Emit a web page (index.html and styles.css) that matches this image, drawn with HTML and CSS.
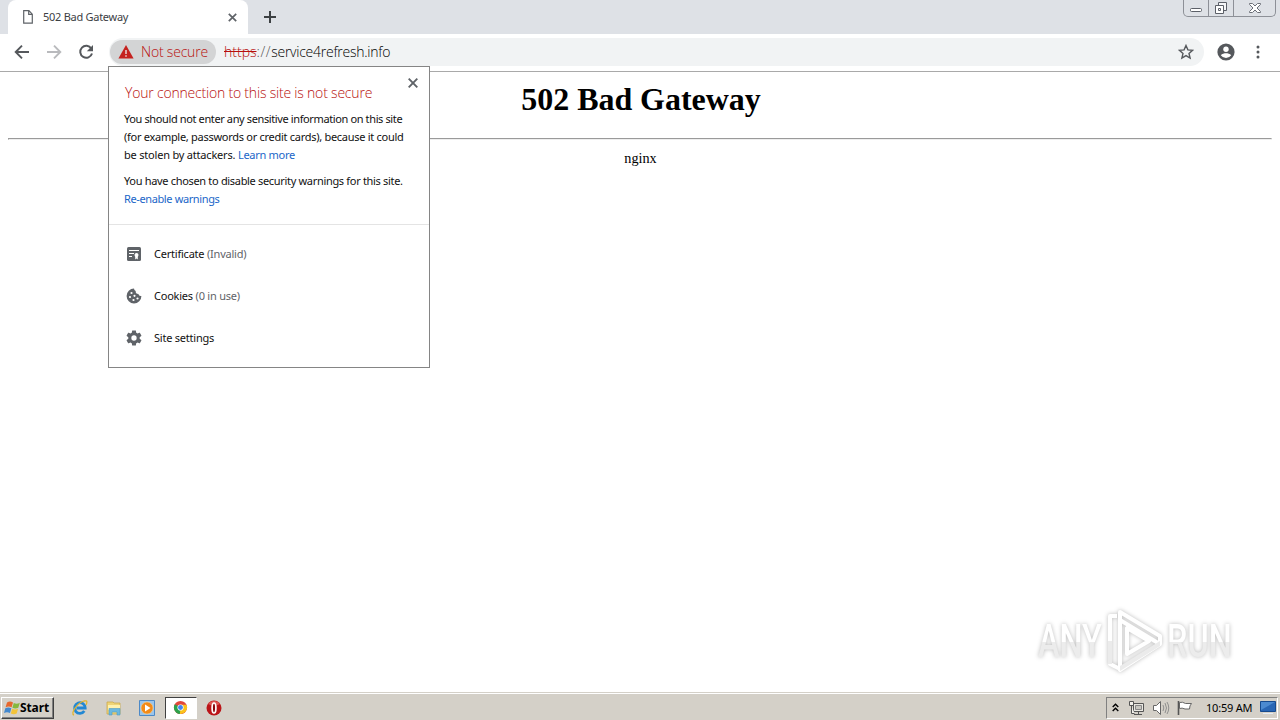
FILE: index.html
```html
<!DOCTYPE html>
<html lang="en">
<head>
    <meta charset="UTF-8">
    <title>502 Bad Gateway</title>
    <link rel="stylesheet" href="styles.css">
</head>
<body>
    <div class="desktop">
        <header class="tab-strip">
            <div class="tab">
                <svg class="page-icon" width="10" height="14" viewBox="0 0 10 14"><path d="M.7.7h5.2l3.4 3.5v9H.7zM5.7.7v3.7h3.6" fill="none" stroke="#5f6368" stroke-width="1.2"/></svg>
                <span class="tab-title">502 Bad Gateway</span>
                <svg class="tab-close" width="9" height="9" viewBox="0 0 9 9"><path d="M.8.8l7.4 7.4M8.2.8L.8 8.2" stroke="#5f6368" stroke-width="1.7"/></svg>
            </div>
            <svg class="new-tab" width="12" height="12" viewBox="0 0 12 12"><path d="M6 0v12M0 6h12" stroke="#3c4043" stroke-width="2"/></svg>
            <div class="window-buttons">
                <span><svg width="14" height="16" viewBox="0 0 14 16"><rect x="1.5" y="8.5" width="11" height="3" rx="1" fill="#fff" stroke="#5c6068"/></svg></span>
                <span><svg width="14" height="16" viewBox="0 0 14 16"><path d="M4.500 2.500h8v8h-8z" fill="#f5f6f8" stroke="#5c6068"/><path d="M1.500 5.500h8v8h-8z" fill="#fff" stroke="#5c6068"/><path d="M4.500 8.500h2v2h-2z" fill="none" stroke="#5c6068"/></svg></span>
                <span class="wide"><svg width="14" height="16" viewBox="0 0 14 16"><path d="M1.500 3.500h3l2.500 2.500 2.500-2.500h3v1L9 8l3.500 3.500v1h-3L7 10l-2.500 2.500h-3v-1L5 8 1.500 4.500z" fill="#fff" stroke="#6c7078"/></svg></span>
            </div>
        </header>

        <nav class="toolbar">
            <svg class="nav-icon" width="16" height="16" viewBox="0 0 16 16"><path d="M15 8H2M8 1.700L1.700 8 8 14.300" fill="none" stroke="#55585c" stroke-width="1.900"/></svg>
            <svg class="nav-icon" width="16" height="16" viewBox="0 0 16 16"><path d="M1 8h13M8 1.700L14.300 8 8 14.300" fill="none" stroke="#b9babd" stroke-width="1.900"/></svg>
            <svg class="nav-icon" width="16" height="16" viewBox="0 0 16 16"><path d="M13.300 4.500A6 6 0 1 0 14 9.500" fill="none" stroke="#55585c" stroke-width="2"/><path d="M15 1v6.200H8.800z" fill="#55585c"/></svg>
            <div class="address-bar">
                <div class="security-chip">
                    <svg width="16" height="14" viewBox="0 0 16 14"><path d="M8 0l7.600 13.500H.4z" fill="#c5221f"/><path d="M8 5v4M8 10.200v1.600" stroke="#ead4d4" stroke-width="1.500"/></svg>
                    <span class="chip-text">Not secure</span>
                </div>
                <span class="url"><s>https</s><i>://</i>service4refresh.info</span>
                <svg class="star" width="16" height="16" viewBox="0 0 16 16"><path d="M8 1.500l1.900 4.400 4.700.4-3.600 3.100 1.100 4.700L8 11.600l-4.100 2.500L5 9.400 1.400 6.300l4.700-.4z" fill="none" stroke="#55585c" stroke-width="1.400"/></svg>
            </div>
            <svg class="avatar" width="18" height="18" viewBox="0 0 18 18"><circle cx="9" cy="9" r="8.600" fill="#55585c"/><circle cx="9" cy="6.200" r="2.700" fill="#fff"/><path d="M3.800 12.300C5 10.700 7.300 10.200 9 10.200s4 .5 5.200 2.100A6.300 6.300 0 0 1 9 15a6.300 6.300 0 0 1-5.200-2.700z" fill="#fff"/></svg>
            <svg class="menu-dots" width="4" height="14" viewBox="0 0 4 14"><g fill="#55585c"><circle cx="2" cy="2" r="1.500"/><circle cx="2" cy="7" r="1.500"/><circle cx="2" cy="12" r="1.500"/></g></svg>
        </nav>

        <main class="page">
            <h1>502 Bad Gateway</h1>
            <hr>
            <p>nginx</p>
        </main>

        <footer class="taskbar">
            <div class="start">
                <svg width="17" height="16" viewBox="0 0 17 16"><path d="M3 2.500q3-2 6 0L7.600 7.300q-3-1.500-6 0z" fill="#e6672d"/><path d="M9.800 3q3 1.500 6-.2l-1.500 4.900q-3 1.400-5.900 0z" fill="#86b83c"/><path d="M1.300 8.300q3-1.500 6 0L6 13q-3-1.700-6 0z" fill="#4388ce"/><path d="M8.200 8.700q3 1.500 5.900 0L12.700 13.500q-3 1.500-5.900 0z" fill="#f3c339"/></svg>
                <b>Start</b>
            </div>
            <div class="task"><svg width="18" height="18" viewBox="0 0 18 18"><path d="M13.300 12A5.300 5.300 0 1 1 14.200 9H5.500" fill="none" stroke="#2388d3" stroke-width="2.800"/><path d="M3 16C-1 15 6 4 13 2c4-1 3 2 2 4" fill="none" stroke="#e3b52f" stroke-width="1.300"/></svg></div>
            <div class="task"><svg width="18" height="18" viewBox="0 0 18 18"><path d="M2 3h6l1 1h6v11H2z" fill="#efd477" stroke="#cba94c" stroke-width=".8"/><path d="M3 6h12v5H3z" fill="#fff1ae"/><path d="M4 16V9.500h11V16h-3v-3H7v3z" fill="#6cb8df" stroke="#4f9bc4" stroke-width=".6"/></svg></div>
            <div class="task"><svg width="18" height="18" viewBox="0 0 18 18"><path d="M1.500 1.500h15v15h-15z" fill="#9bc5eb" stroke="#4c89c7"/><circle cx="9" cy="9" r="6" fill="#f28a18" stroke="#fbd08b" stroke-width=".6"/><path d="M7 5.500v7L12.500 9z" fill="#fff"/></svg></div>
            <div class="task active"><svg width="15" height="15" viewBox="0 0 16 16"><circle cx="8" cy="8" r="7" fill="#e2473b"/><path d="M8 8L1.900 4.500A7 7 0 0 0 7.300 15L11 9.700z" fill="#2ba24c"/><path d="M8 8l-.7 7A7 7 0 0 0 14.300 5H8z" fill="#fbc31b"/><circle cx="8" cy="8" r="3.300" fill="#fff"/><circle cx="8" cy="8" r="2.600" fill="#4385ef"/></svg></div>
            <div class="task"><svg width="16" height="16" viewBox="0 0 16 16"><circle cx="8" cy="8" r="7.500" fill="#bb1519"/><path d="M2 4a7.500 7.500 0 0 1 12 0q-6 3-12 0z" fill="#de5552"/><ellipse cx="8" cy="8" rx="1.900" ry="5" fill="#8a080c" stroke="#fff" stroke-width="1.700"/></svg></div>
            <div class="tray">
                <svg class="chevrons" width="7" height="9" viewBox="0 0 7 9"><path d="M.7 4L3.500 1.200 6.300 4M.7 8l2.800-2.800L6.300 8" fill="none" stroke="#000" stroke-width="1.400"/></svg>
                <svg class="network" width="17" height="16" viewBox="0 0 17 16"><path d="M5.500 3.500h10v8h-10z" fill="#e9e7e1" stroke="#555"/><path d="M7.500 5.500h6v4h-6z" fill="#c9c7c1" stroke="#888"/><path d="M1.500 1.500h4v4h-4zM3.500 5.500v8h3M6 14.500h8M10.500 12v2" fill="#f3f1ec" stroke="#555"/></svg>
                <svg class="sound" width="18" height="16" viewBox="0 0 18 16"><path d="M1.500 5.500h3l4-4v13l-4-4h-3z" fill="#fff" stroke="#666"/><path d="M11 5q1.600 3 0 6M13 3q3 5 0 10M15 2q3.500 6 0 12" fill="none" stroke="#888" stroke-width=".9"/></svg>
                <svg class="flag" width="18" height="16" viewBox="0 0 18 16"><path d="M2.500 1v14" stroke="#555" stroke-width="1.600"/><path d="M3.500 2.500q3-1 6 1h6q-2 2-2 5.500H9q-3-1.500-5.500-.5z" fill="#fff" stroke="#666"/></svg>
                <span class="clock">10:59 AM</span>
                <svg class="show-desktop" width="16" height="15" viewBox="0 0 16 15"><path d="M.5 1.500h15v10H.5z" fill="#2966b4" stroke="#164a8e"/><path d="M1 2h14L1 10z" fill="#4c8ad0"/><path d="M3 13.500h10" stroke="#e5edf5"/></svg>
            </div>
        </footer>

        <!-- Page info bubble -->
        <section class="popup">
            <div class="popup-top">
                <svg class="popup-close" width="10" height="10" viewBox="0 0 10 10"><path d="M.7.7l8.600 8.600M9.300.7L.7 9.300" stroke="#5f6368" stroke-width="1.900"/></svg>
                <h2>Your connection to this site is not secure</h2>
                <p><span class="tight">You should not enter any sensitive information on this site</span><br>(for example, passwords or credit cards), because it could<br><span class="loose">be stolen by attackers. </span><a>Learn more</a></p>
                <p><span class="chosen">You have chosen to disable security warnings for this site.</span><br><a class="tight">Re-enable warnings</a></p>
            </div>
            <div class="popup-rows">
                <div class="row">
                    <svg width="16" height="16" viewBox="0 0 16 16"><rect x="1" y="1" width="14" height="14" rx="1.500" fill="#5f6368"/><path d="M3 4.500h10M3 7.500h5M3 10.500h3" stroke="#fff" stroke-width="1"/><circle cx="10.500" cy="9" r="2" fill="#fff"/><path d="M9.200 10h2.600v3.500l-1.300-1-1.300 1z" fill="#fff"/></svg>
                    <span>Certificate <em>(Invalid)</em></span>
                </div>
                <div class="row">
                    <svg width="16" height="16" viewBox="0 0 16 16"><path d="M8 .6A7.400 7.400 0 1 0 15.400 8q-2.500.5-3-2-3 0-2.700-3Q8 2.500 8 .6z" fill="#5f6368"/><g fill="#fff"><circle cx="5.500" cy="5" r="1.100"/><circle cx="4" cy="9" r="1.100"/><circle cx="8.500" cy="7.800" r="1.100"/><circle cx="7.500" cy="12" r="1.100"/><circle cx="11.500" cy="10.500" r="1.100"/></g></svg>
                    <span>Cookies <em>(0 in use)</em></span>
                </div>
                <div class="row">
                    <svg width="16" height="16" viewBox="1.500 1.500 21 21"><path fill="#5f6368" d="M19.430 12.980c.04-.32.07-.64.07-.98s-.03-.66-.07-.98l2.110-1.650c.19-.15.24-.42.12-.64l-2-3.460c-.12-.22-.39-.3-.61-.22l-2.490 1c-.52-.4-1.080-.73-1.690-.98l-.38-2.650C14.460 2.180 14.250 2 14 2h-4c-.25 0-.46.18-.49.42l-.38 2.650c-.61.25-1.170.59-1.690.98l-2.490-1c-.23-.09-.49 0-.61.22l-2 3.460c-.13.22-.07.49.12.64l2.110 1.650c-.04.32-.07.65-.07.98s.03.66.07.98l-2.110 1.650c-.19.15-.24.42-.12.64l2 3.460c.12.22.39.3.61.22l2.490-1c.52.4 1.080.73 1.690.98l.38 2.650c.03.24.24.42.49.42h4c.25 0 .46-.18.49-.42l.38-2.650c.61-.25 1.170-.59 1.690-.98l2.490 1c.23.09.49 0 .61-.22l2-3.460c.12-.22.07-.49-.12-.64l-2.110-1.650zM12 15.500a3.500 3.500 0 1 1 0-7 3.500 3.500 0 0 1 0 7z"/></svg>
                    <span>Site settings</span>
                </div>
            </div>
        </section>

        <!-- Watermark -->
        <div class="watermark">
            <span class="word any">ANY</span>
            <svg width="60" height="66" viewBox="0 0 60 66"><g fill="none" stroke="#fff" stroke-width="4" stroke-linejoin="round"><path d="M10 8H3v48l10 5"/><path d="M13 4l40 24v8L13 62z"/><path d="M13 12l38 23M20 20v26l22-13z"/></g><path d="M53 33L13 58v5l40-25zM1 33h4v23H1z" fill="#ebebeb"/></svg>
            <span class="word">RUN</span>
        </div>
    </div>
</body>
</html>
```
FILE: styles.css
```css
body {
    margin: 0;
    font-family: "Noto Sans", sans-serif;
    font-size: 11px;
    color: #111;
    overflow: hidden;
}

svg {
    display: block;
    flex: none;
}

.desktop {
    position: relative;
    display: flex;
    flex-direction: column;
    width: 1280px;
    height: 720px;
    background: #fff;
}

/* Tab strip */
.tab-strip {
    display: flex;
    align-items: flex-start;
    height: 34px;
    background: #dee1e6;
}
.tab {
    display: flex;
    align-items: center;
    box-sizing: border-box;
    width: 240px;
    height: 34px;
    margin-left: 8px;
    padding: 0 11px 0 15px;
    background: #fff;
    border-radius: 8px 8px 0 0;
}
.tab-title {
    margin: -2px 0 0 10px;
    color: #3c4043;
    letter-spacing: -0.27px;
    white-space: nowrap;
}
.tab-close {
    margin-left: auto;
}
.new-tab {
    margin: 11px 0 0 16px;
}
.window-buttons {
    display: flex;
    height: 16px;
    margin: 0 4px 0 auto;
    border: 1px solid #8d9097;
    border-top: 0;
    border-radius: 0 0 5px 5px;
}
.window-buttons span {
    display: flex;
    justify-content: center;
    width: 24px;
    border-right: 1px solid #8d9097;
}
.window-buttons .wide {
    width: 41px;
    border-right: 0;
}

/* Toolbar */
.toolbar {
    display: flex;
    align-items: center;
    box-sizing: border-box;
    height: 38px;
    padding: 0 20px 1px 14px;
    border-bottom: 1px solid #a9a9a9;
}
.nav-icon {
    margin-right: 16px;
}
.address-bar {
    display: flex;
    align-items: center;
    box-sizing: border-box;
    width: 1095px;
    height: 28px;
    margin-left: -1px;
    padding: 0 10px 0 1px;
    background: #f1f3f4;
    border-radius: 14px;
}
.security-chip {
    display: flex;
    align-items: center;
    box-sizing: border-box;
    width: 106px;
    height: 24px;
    padding-left: 8px;
    background: #d3d4d5;
    border-radius: 12px;
    color: #b80f0c;
}
.chip-text {
    margin: -1px 0 0 7px;
    font-family: "Open Sans", sans-serif;
    font-size: 14px;
    font-weight: 300;
    letter-spacing: -0.2px;
    white-space: nowrap;
}
.url {
    margin: -1px 0 0 8px;
    color: #000;
    font-family: "Open Sans", sans-serif;
    font-size: 14px;
    font-weight: 300;
    letter-spacing: -0.25px;
}
.url s {
    color: #b80f0c;
    letter-spacing: 0;
}
.url i {
    color: #555;
    font-style: normal;
    letter-spacing: 0.6px;
}
.star {
    margin-left: auto;
}
.avatar {
    margin-left: 13px;
}
.menu-dots {
    margin-left: auto;
}

/* Page content */
.page {
    flex: 1;
    padding: 0 8px;
    font-family: "Liberation Serif", serif;
    color: #000;
    text-align: center;
}
.page h1 {
    margin: 8px 0 20px;
    padding-left: 2px;
    font-size: 32px;
    letter-spacing: -0.05px;
    line-height: 38px;
}
.page hr {
    margin: 0;
}
.page p {
    margin: 9px 0 0;
    padding-left: 1px;
    font-size: 14.2px;
    line-height: 18px;
}

/* Page info popup */
.popup {
    position: absolute;
    left: 108px;
    top: 66px;
    box-sizing: border-box;
    width: 322px;
    height: 302px;
    background: #fff;
    border: 1px solid #858585;
    white-space: nowrap;
}
.popup-top {
    position: relative;
    box-sizing: border-box;
    height: 158px;
    padding: 16px 0 0 15px;
    border-bottom: 1px solid #e4e4e4;
}
.popup-close {
    position: absolute;
    right: 11px;
    top: 11px;
}
.popup h2 {
    margin: 0 0 7px 1px;
    color: #b80f0c;
    font-family: "Open Sans", sans-serif;
    font-size: 14px;
    font-weight: 300;
    letter-spacing: -0.2px;
    line-height: 20px;
}
.popup p {
    margin: 0 0 8px;
    letter-spacing: -0.28px;
    line-height: 18px;
}
.popup .tight {
    letter-spacing: -0.38px;
}
.popup .chosen {
    letter-spacing: -0.32px;
}
.popup .loose {
    letter-spacing: -0.2px;
}
.popup a {
    color: #1a66c8;
}
.popup-rows {
    padding: 8px 0 0 17px;
}
.row {
    display: flex;
    align-items: center;
    height: 42px;
}
.row span {
    margin: -2px 0 0 12px;
    letter-spacing: -0.22px;
}
.row em {
    color: #5f6368;
    font-style: normal;
}

/* Taskbar */
.taskbar {
    display: flex;
    align-items: center;
    box-sizing: border-box;
    height: 28px;
    padding: 2px 2px 0 1px;
    background: #d4d0c8;
    border-top: 1px solid #d4d0c8;
    box-shadow: inset 0 1px #fff;
}
.start {
    display: flex;
    align-items: center;
    box-sizing: border-box;
    width: 53px;
    height: 22px;
    margin-right: 10px;
    padding-left: 2px;
    border: 1px solid;
    border-color: #fff #404040 #404040 #fff;
    box-shadow: inset -1px -1px #808080;
    color: #000;
}
.start b {
    margin: -1px 0 0 -1px;
    font-size: 12px;
    letter-spacing: -0.1px;
}
.task {
    display: flex;
    align-items: center;
    justify-content: center;
    box-sizing: border-box;
    width: 32px;
    height: 22px;
    margin-right: 1.5px;
}
.active {
    background: #fff;
    border: 1px solid;
    border-color: #404040 #fff #fff #404040;
}
.tray {
    display: flex;
    align-items: center;
    box-sizing: border-box;
    width: 172px;
    height: 22px;
    margin-left: auto;
    padding: 0 1px 0 5px;
    border: 1px solid;
    border-color: #808080 #fff #fff #808080;
}
.network {
    margin-left: 9px;
}
.sound {
    margin-left: 7px;
}
.flag {
    margin-left: 6px;
}
.clock {
    margin: -1px 0 0 12px;
    color: #000;
    letter-spacing: -0.2px;
    white-space: nowrap;
}
.show-desktop {
    margin-left: auto;
}

/* Watermark */
.watermark {
    position: absolute;
    left: 1038px;
    top: 608px;
    display: flex;
    align-items: center;
    width: 196px;
    height: 66px;
    filter: drop-shadow(0 0 2px #bbb);
}
.word {
    flex: none;
    color: transparent;
    background: linear-gradient(#fff 52%, #ececec 52%);
    background-clip: text;
    -webkit-background-clip: text;
    font-family: Roboto, sans-serif;
    font-size: 47px;
    font-weight: 500;
    line-height: 48px;
    transform: scaleX(0.69);
    transform-origin: left;
}
.any {
    margin-right: -24px;
}
```
